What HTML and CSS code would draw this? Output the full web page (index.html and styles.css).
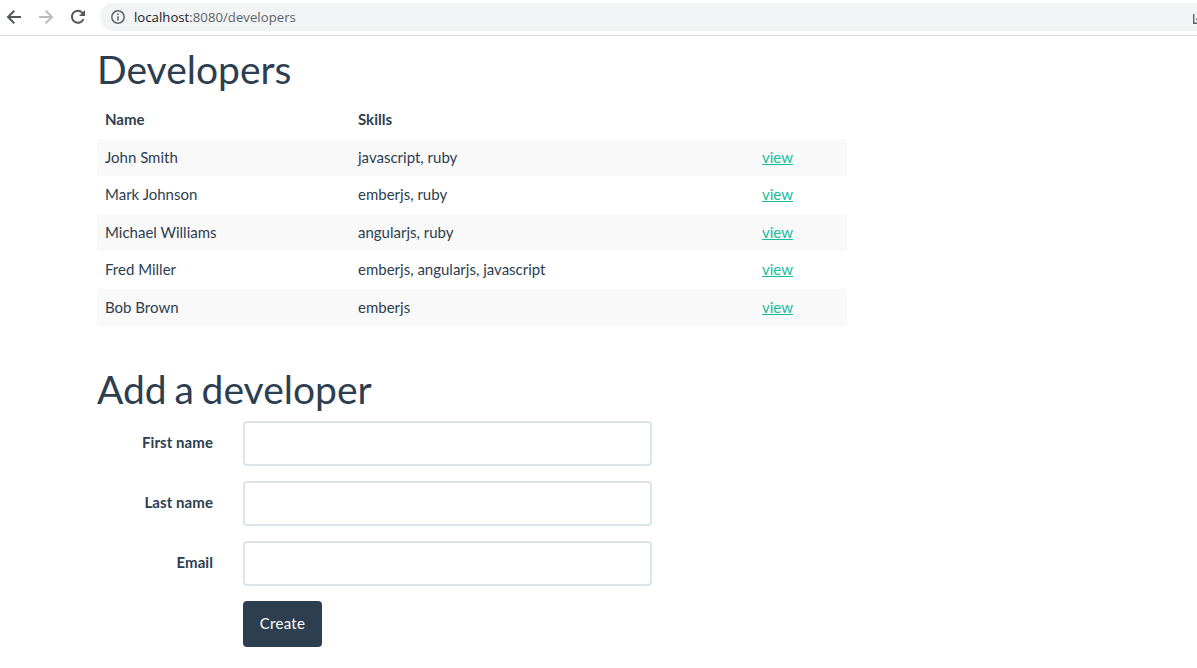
FILE: index.html
```html
<!DOCTYPE html>
<html lang="en">
<head>
<meta charset="utf-8">
<title>Developers</title>
<link rel="stylesheet" href="styles.css">
</head>
<body>
<header class="toolbar">
  <svg class="nav-icon" viewBox="0 0 16 16"><path d="M15 8H2.5M8.3 1.7L2 8L8.3 14.3"/></svg>
  <svg class="nav-icon disabled" viewBox="0 0 16 16"><path d="M1 8H13.5M7.7 1.7L14 8L7.7 14.3"/></svg>
  <svg class="nav-icon" viewBox="0 0 16 16"><path d="M13.5 10A6 6 0 1 1 12.4 3.8L13.5 5"/><path class="solid" d="M15 1V7H9Z"/></svg>
  <div class="address">
    <svg class="info-icon" viewBox="0 0 16 16"><circle cx="8" cy="8" r="6.2"/><path d="M8 7.2V11.5M8 4.5V6"/></svg>
    <span class="url">localhost<span class="path">:8080/developers</span></span>
    <svg class="share-icon" viewBox="0 0 12 12"><path d="M.7 1V10.3H11M3.5 7C4 4.8 6 4 9 4"/></svg>
  </div>
</header>
<main class="page">
  <h1>Developers</h1>
  <table class="developers">
    <thead><tr><th class="name">Name</th><th class="skills">Skills</th><th></th></tr></thead>
    <tbody>
      <tr><td>John Smith</td><td>javascript, ruby</td><td><a href="#">view</a></td></tr>
      <tr><td>Mark Johnson</td><td>emberjs, ruby</td><td><a href="#">view</a></td></tr>
      <tr><td>Michael Williams</td><td>angularjs, ruby</td><td><a href="#">view</a></td></tr>
      <tr><td>Fred Miller</td><td>emberjs, angularjs, javascript</td><td><a href="#">view</a></td></tr>
      <tr><td>Bob Brown</td><td>emberjs</td><td><a href="#">view</a></td></tr>
    </tbody>
  </table>
  <h1 class="form-title">Add a developer</h1>
  <form class="form">
    <label for="first">First name</label><input id="first" type="text">
    <label for="last">Last name</label><input id="last" type="text">
    <label for="email">Email</label><input id="email" type="text">
    <button type="button">Create</button>
  </form>
</main>
</body>
</html>
```
FILE: styles.css
```css
* { box-sizing: border-box; }
body { margin: 0; overflow: hidden; background: #fff; color: #2c3e50; font: 15px/21.45px Lato, sans-serif; }
.toolbar { display: flex; align-items: center; height: 36px; padding: 0 0 2px 6px; border-bottom: 1px solid #dadce0; }
.nav-icon { flex: none; width: 16px; height: 16px; margin-right: 16px; fill: none; stroke: #54575b; stroke-width: 2; }
.disabled { stroke: #babcbe; }
.nav-icon .solid { fill: #54575b; stroke: none; }
.address { display: flex; align-items: center; flex: 1; height: 28px; margin-left: -2px; padding-left: 10px; border-radius: 14px 0 0 14px; background: #f1f3f4; overflow: hidden; }
.info-icon { flex: none; width: 16px; height: 16px; fill: none; stroke: #5f6368; stroke-width: 1.5; }
.url { margin-left: 8px; color: #202124; font: 13.2px/20px "Open Sans", sans-serif; letter-spacing: 0.01px; }
.path { color: #5f6368; }
.share-icon { flex: none; width: 12px; height: 12px; margin: 4px -8px 0 auto; fill: none; stroke: #5f6368; stroke-width: 1.4; }
.page { width: 750px; margin-left: 97px; padding-top: 12px; }
h1 { margin: 0; font-size: 39px; font-weight: 400; line-height: 43px; }
.form-title { word-spacing: -2.2px; }
.developers { width: 750px; margin: 10px 0 42px; border-collapse: collapse; table-layout: fixed; }
.developers th, .developers td { height: 37.5px; padding: 8px; text-align: left; line-height: 21.45px; }
.name { width: 253px; }
.skills { width: 404px; }
tbody tr:nth-child(odd) { background: #f9f9f9; }
a { color: #18bc9c; text-decoration: underline; }
.form { display: grid; grid-template-columns: 116px 409px; column-gap: 30px; row-gap: 15px; margin-top: 10px; }
.form label { padding-top: 11px; text-align: right; font-weight: 700; letter-spacing: 0.07px; }
.form input { height: 45px; border: 2px solid #dce4ec; border-radius: 4px; padding: 10px 15px; font: inherit; color: inherit; }
.form button { grid-column: 2; justify-self: start; width: 79px; height: 46px; padding: 0; border: 0; border-radius: 4px; background: #2c3e50; color: #fff; font: inherit; letter-spacing: 0.3px; }
```
